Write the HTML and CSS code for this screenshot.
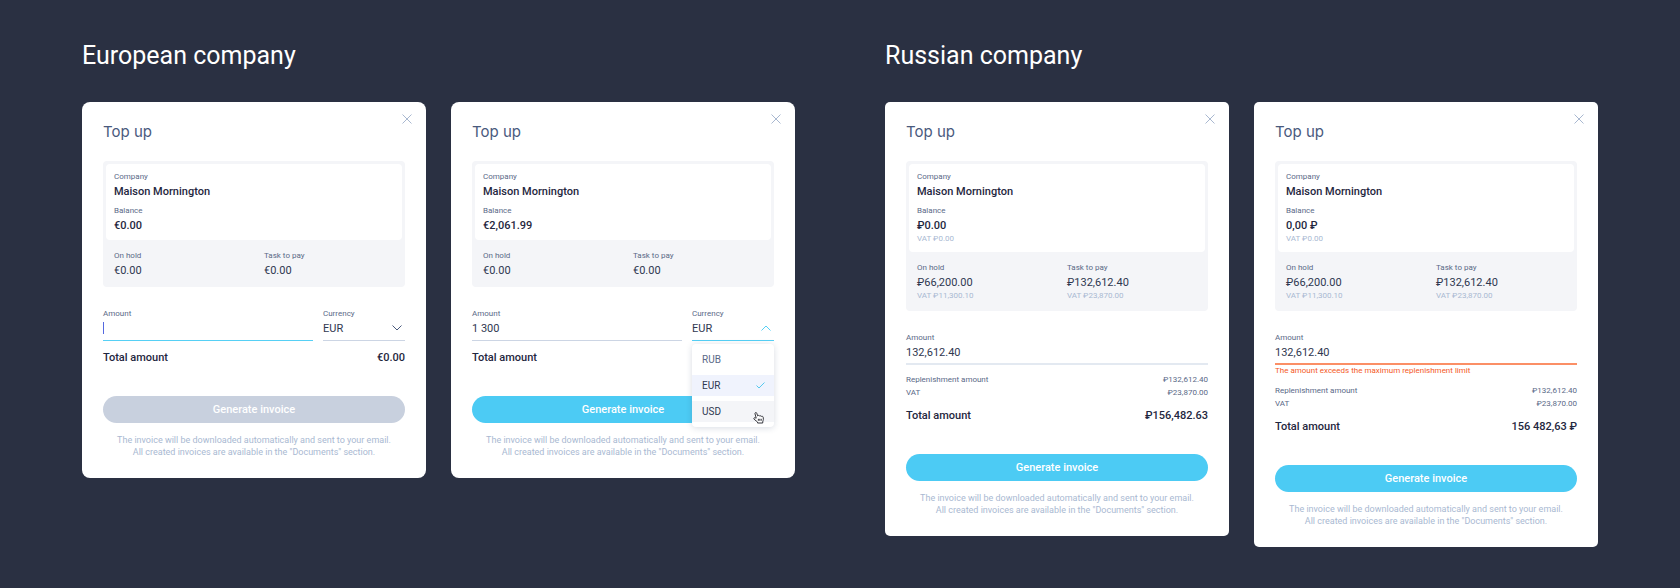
FILE: index.html
```html
<!DOCTYPE html>
<html lang="en">
<head>
    <meta charset="UTF-8">
    <meta name="viewport" content="width=device-width, initial-scale=1.0">
    <title>Top up</title>
    <link rel="stylesheet" href="styles.css">
</head>
<body>
    <main class="board">
        <section class="group">
            <h1>European company</h1>
            <div class="cards">
                <form class="card card-round">
                    <button type="button" class="close" aria-label="Close">
                        <svg viewBox="0 0 10 10"><path d="M0.5 0.5l9 9M9.5 0.5l-9 9"/></svg>
                    </button>
                    <h2>Top up</h2>
                    <div class="info">
                        <dl class="info-main">
                            <div><dt>Company</dt><dd>Maison Mornington</dd></div>
                            <div><dt>Balance</dt><dd>€0.00</dd></div>
                        </dl>
                        <dl class="info-extra">
                            <div><dt>On hold</dt><dd>€0.00</dd></div>
                            <div><dt>Task to pay</dt><dd>€0.00</dd></div>
                        </dl>
                    </div>
                    <div class="fields">
                        <div class="field active">
                            <label for="amount1">Amount</label>
                            <input type="text" id="amount1">
                            <span class="caret"></span>
                        </div>
                        <div class="field currency">
                            <label for="currency1">Currency</label>
                            <select id="currency1">
                                <option>EUR</option>
                                <option>RUB</option>
                                <option>USD</option>
                            </select>
                            <svg class="chevron" viewBox="0 0 10 6"><path d="M0.5 0.5L5 5l4.500-4.500"/></svg>
                        </div>
                    </div>
                    <div class="total"><span>Total amount</span><span>€0.00</span></div>
                    <button type="button" class="submit" disabled>Generate invoice</button>
                    <p class="hint">The invoice will be downloaded automatically and sent to your email.<br>All created invoices are available in the "Documents" section.</p>
                </form>

                <form class="card card-round">
                    <button type="button" class="close" aria-label="Close">
                        <svg viewBox="0 0 10 10"><path d="M0.5 0.5l9 9M9.5 0.5l-9 9"/></svg>
                    </button>
                    <h2>Top up</h2>
                    <div class="info">
                        <dl class="info-main">
                            <div><dt>Company</dt><dd>Maison Mornington</dd></div>
                            <div><dt>Balance</dt><dd>€2,061.99</dd></div>
                        </dl>
                        <dl class="info-extra">
                            <div><dt>On hold</dt><dd>€0.00</dd></div>
                            <div><dt>Task to pay</dt><dd>€0.00</dd></div>
                        </dl>
                    </div>
                    <div class="fields">
                        <div class="field">
                            <label for="amount2">Amount</label>
                            <input type="text" id="amount2" value="1 300">
                        </div>
                        <div class="field currency active">
                            <label for="currency2">Currency</label>
                            <select id="currency2">
                                <option>EUR</option>
                                <option>RUB</option>
                                <option>USD</option>
                            </select>
                            <svg class="chevron" viewBox="0 0 10 6"><path d="M0.5 5.5L5 1l4.500 4.500"/></svg>
                            <ul class="menu">
                                <li>RUB</li>
                                <li class="selected">EUR
                                    <svg class="check" viewBox="0 0 9 7"><path d="M0.5 3.500L3 6l5.500-5.500"/></svg>
                                </li>
                                <li class="hover">USD
                                    <svg class="hand" viewBox="0 0 20 20"><path d="M6.500 11L4.600 4.200a1.400 1.400 0 0 1 2.700-.8L8.700 7.500c.4-1 2.700-.9 3 .3.500-.8 2.400-.6 2.600.6.600-.7 2.700-.3 2.900 1.100l.3 3.300c0 1.700-1 2.600-1 4v1.700H8.600v-1.500L3.200 12.600c-1.200-1.700.8-3 2-1.900z"/><path d="M9.800 12v3M12 12v3M14.200 12v3"/></svg>
                                </li>
                            </ul>
                        </div>
                    </div>
                    <div class="total"><span>Total amount</span></div>
                    <button type="button" class="submit">Generate invoice</button>
                    <p class="hint">The invoice will be downloaded automatically and sent to your email.<br>All created invoices are available in the "Documents" section.</p>
                </form>
            </div>
        </section>

        <section class="group">
            <h1>Russian company</h1>
            <div class="cards">
                <form class="card">
                    <button type="button" class="close" aria-label="Close">
                        <svg viewBox="0 0 10 10"><path d="M0.5 0.5l9 9M9.5 0.5l-9 9"/></svg>
                    </button>
                    <h2>Top up</h2>
                    <div class="info">
                        <dl class="info-main">
                            <div><dt>Company</dt><dd>Maison Mornington</dd></div>
                            <div><dt>Balance</dt><dd>₽0.00</dd><dd class="vat">VAT ₽0.00</dd></div>
                        </dl>
                        <dl class="info-extra">
                            <div><dt>On hold</dt><dd>₽66,200.00</dd><dd class="vat">VAT ₽11,300.10</dd></div>
                            <div><dt>Task to pay</dt><dd>₽132,612.40</dd><dd class="vat">VAT ₽23,870.00</dd></div>
                        </dl>
                    </div>
                    <div class="fields">
                        <div class="field thick">
                            <label for="amount3">Amount</label>
                            <input type="text" id="amount3" value="132,612.40">
                        </div>
                    </div>
                    <div class="summary">
                        <div><span>Replenishment amount</span><span>₽132,612.40</span></div>
                        <div><span>VAT</span><span>₽23,870.00</span></div>
                    </div>
                    <div class="total"><span>Total amount</span><span>₽156,482.63</span></div>
                    <button type="button" class="submit">Generate invoice</button>
                    <p class="hint">The invoice will be downloaded automatically and sent to your email.<br>All created invoices are available in the "Documents" section.</p>
                </form>

                <form class="card">
                    <button type="button" class="close" aria-label="Close">
                        <svg viewBox="0 0 10 10"><path d="M0.5 0.5l9 9M9.5 0.5l-9 9"/></svg>
                    </button>
                    <h2>Top up</h2>
                    <div class="info">
                        <dl class="info-main">
                            <div><dt>Company</dt><dd>Maison Mornington</dd></div>
                            <div><dt>Balance</dt><dd>0,00 ₽</dd><dd class="vat">VAT ₽0.00</dd></div>
                        </dl>
                        <dl class="info-extra">
                            <div><dt>On hold</dt><dd>₽66,200.00</dd><dd class="vat">VAT ₽11,300.10</dd></div>
                            <div><dt>Task to pay</dt><dd>₽132,612.40</dd><dd class="vat">VAT ₽23,870.00</dd></div>
                        </dl>
                    </div>
                    <div class="fields">
                        <div class="field thick invalid">
                            <label for="amount4">Amount</label>
                            <input type="text" id="amount4" value="132,612.40" aria-describedby="error4">
                        </div>
                    </div>
                    <div class="error" id="error4">The amount exceeds the maximum replenishment limit</div>
                    <div class="summary">
                        <div><span>Replenishment amount</span><span>₽132,612.40</span></div>
                        <div><span>VAT</span><span>₽23,870.00</span></div>
                    </div>
                    <div class="total"><span>Total amount</span><span>156 482,63 ₽</span></div>
                    <button type="button" class="submit">Generate invoice</button>
                    <p class="hint">The invoice will be downloaded automatically and sent to your email.<br>All created invoices are available in the "Documents" section.</p>
                </form>
            </div>
        </section>
    </main>
</body>
</html>
```
FILE: styles.css
```css
* {
    box-sizing: border-box;
}
body {
    margin: 0;
    min-height: 100vh;
    background-color: #2a3042;
    font-family: Roboto, Arial, sans-serif;
    color: #1f2740;
}
.board {
    display: grid;
    grid-template-columns: 1fr 1fr;
    gap: 90px;
    padding: 41px 82px 40px;
}
h1 {
    margin: 0 0 31px;
    font-size: 25px;
    line-height: 30px;
    font-weight: 400;
    color: #fff;
}
.cards {
    display: grid;
    grid-template-columns: 1fr 1fr;
    align-items: start;
    gap: 25px;
}
.card {
    position: relative;
    padding: 20px 21px;
    background-color: #fff;
    border-radius: 5px;
}
.card-round {
    border-radius: 8px;
}
svg {
    display: block;
    fill: none;
}
.close {
    position: absolute;
    top: 12px;
    right: 14px;
    padding: 0;
    border: none;
    background: none;
    cursor: pointer;
}
.close svg {
    width: 10px;
    height: 10px;
    stroke: #a9b8d0;
}
h2 {
    margin: 0 0 19px;
    font-family: Inter, sans-serif;
    font-size: 15px;
    line-height: 20px;
    font-weight: 400;
    color: #4a5a7d;
}

/* company info */
.info {
    padding: 3px;
    background-color: #f4f5f8;
    border-radius: 4px;
}
dl, dd {
    margin: 0;
}
.info-main {
    display: grid;
    gap: 6px;
    padding: 7px 8px;
    background-color: #fff;
    border-radius: 4px;
}
.info-extra {
    display: grid;
    grid-template-columns: 1fr 1fr;
    gap: 20px;
    padding: 10px 8px 6px;
}
dt, label {
    display: block;
    font-size: 8px;
    line-height: 12px;
    color: #5a6987;
}
dd {
    padding-top: 1px;
    font-size: 11px;
    line-height: 15px;
    color: #2f3850;
}
.info-main dd {
    font-weight: 500;
    color: #1f2740;
}
.info dd.vat {
    padding-top: 0;
    font-size: 8px;
    line-height: 12px;
    font-weight: 400;
    color: #a9b9d2;
}

/* fields */
.fields {
    display: flex;
    gap: 10px;
    margin-top: 21px;
}
.field {
    position: relative;
    flex: 1;
    border-bottom: 1px solid #ccd5e4;
}
.field.currency {
    flex: 0 0 82px;
}
.field.thick {
    border-bottom: 2px solid #e3e9f1;
}
.field.active {
    border-color: #56d0f5;
}
.field.invalid {
    border-color: #fb8f66;
}
input, select {
    display: block;
    width: 100%;
    height: 16px;
    margin-bottom: 4px;
    padding: 1px 0 0;
    border: none;
    outline: none;
    appearance: none;
    background: none;
    font-family: inherit;
    font-size: 11px;
    line-height: 15px;
    color: #2f3850;
}
.thick input {
    margin-bottom: 3px;
}
.caret {
    position: absolute;
    left: 0;
    top: 14px;
    width: 1px;
    height: 12px;
    background-color: #5468e0;
}
.chevron {
    position: absolute;
    right: 3px;
    top: 17px;
    width: 10px;
    height: 6px;
    stroke: #4a5a7d;
    pointer-events: none;
}
.active .chevron {
    stroke: #56d0f5;
}
.menu {
    position: absolute;
    left: 0;
    right: 0;
    top: 36px;
    display: grid;
    gap: 5px;
    margin: 0;
    padding: 5px 0;
    list-style: none;
    background-color: #fff;
    border-radius: 4px;
    box-shadow: 0 1px 6px rgba(40, 60, 100, 0.18);
    font-size: 10px;
    line-height: 21px;
    color: #5a6987;
}
.menu li {
    display: flex;
    align-items: center;
    justify-content: space-between;
    padding: 0 9px 0 10px;
}
.menu .selected {
    background-color: #f0f3fd;
    color: #2f3850;
}
.menu .hover {
    background-color: #f4f5f8;
    color: #2f3850;
}
.check {
    width: 9px;
    height: 7px;
    stroke: #56c8ee;
}
.hand {
    position: absolute;
    right: 9px;
    bottom: 3px;
    width: 13px;
    height: 13px;
    fill: #fff;
    stroke: #2f3038;
    stroke-width: 1.5;
}
.error {
    font-size: 8px;
    line-height: 11px;
    color: #f4591f;
}

/* totals */
.summary {
    margin-top: 8px;
    font-size: 8px;
    line-height: 13px;
    color: #5a6987;
}
.summary div, .total {
    display: flex;
    justify-content: space-between;
}
.total {
    margin-top: 8px;
    padding-top: 1px;
    font-size: 11px;
    line-height: 15px;
    font-weight: 500;
}
.submit {
    display: block;
    width: 100%;
    height: 27px;
    margin-top: 31px;
    border: none;
    border-radius: 14px;
    background-color: #4ccbf4;
    color: #fff;
    font-family: inherit;
    font-size: 11px;
    font-weight: 500;
    cursor: pointer;
}
.submit:disabled {
    background-color: #c8d0de;
    cursor: default;
}
.hint {
    margin: 11px 0 0;
    font-size: 9px;
    line-height: 12px;
    text-align: center;
    color: #a9b9d2;
}
```
